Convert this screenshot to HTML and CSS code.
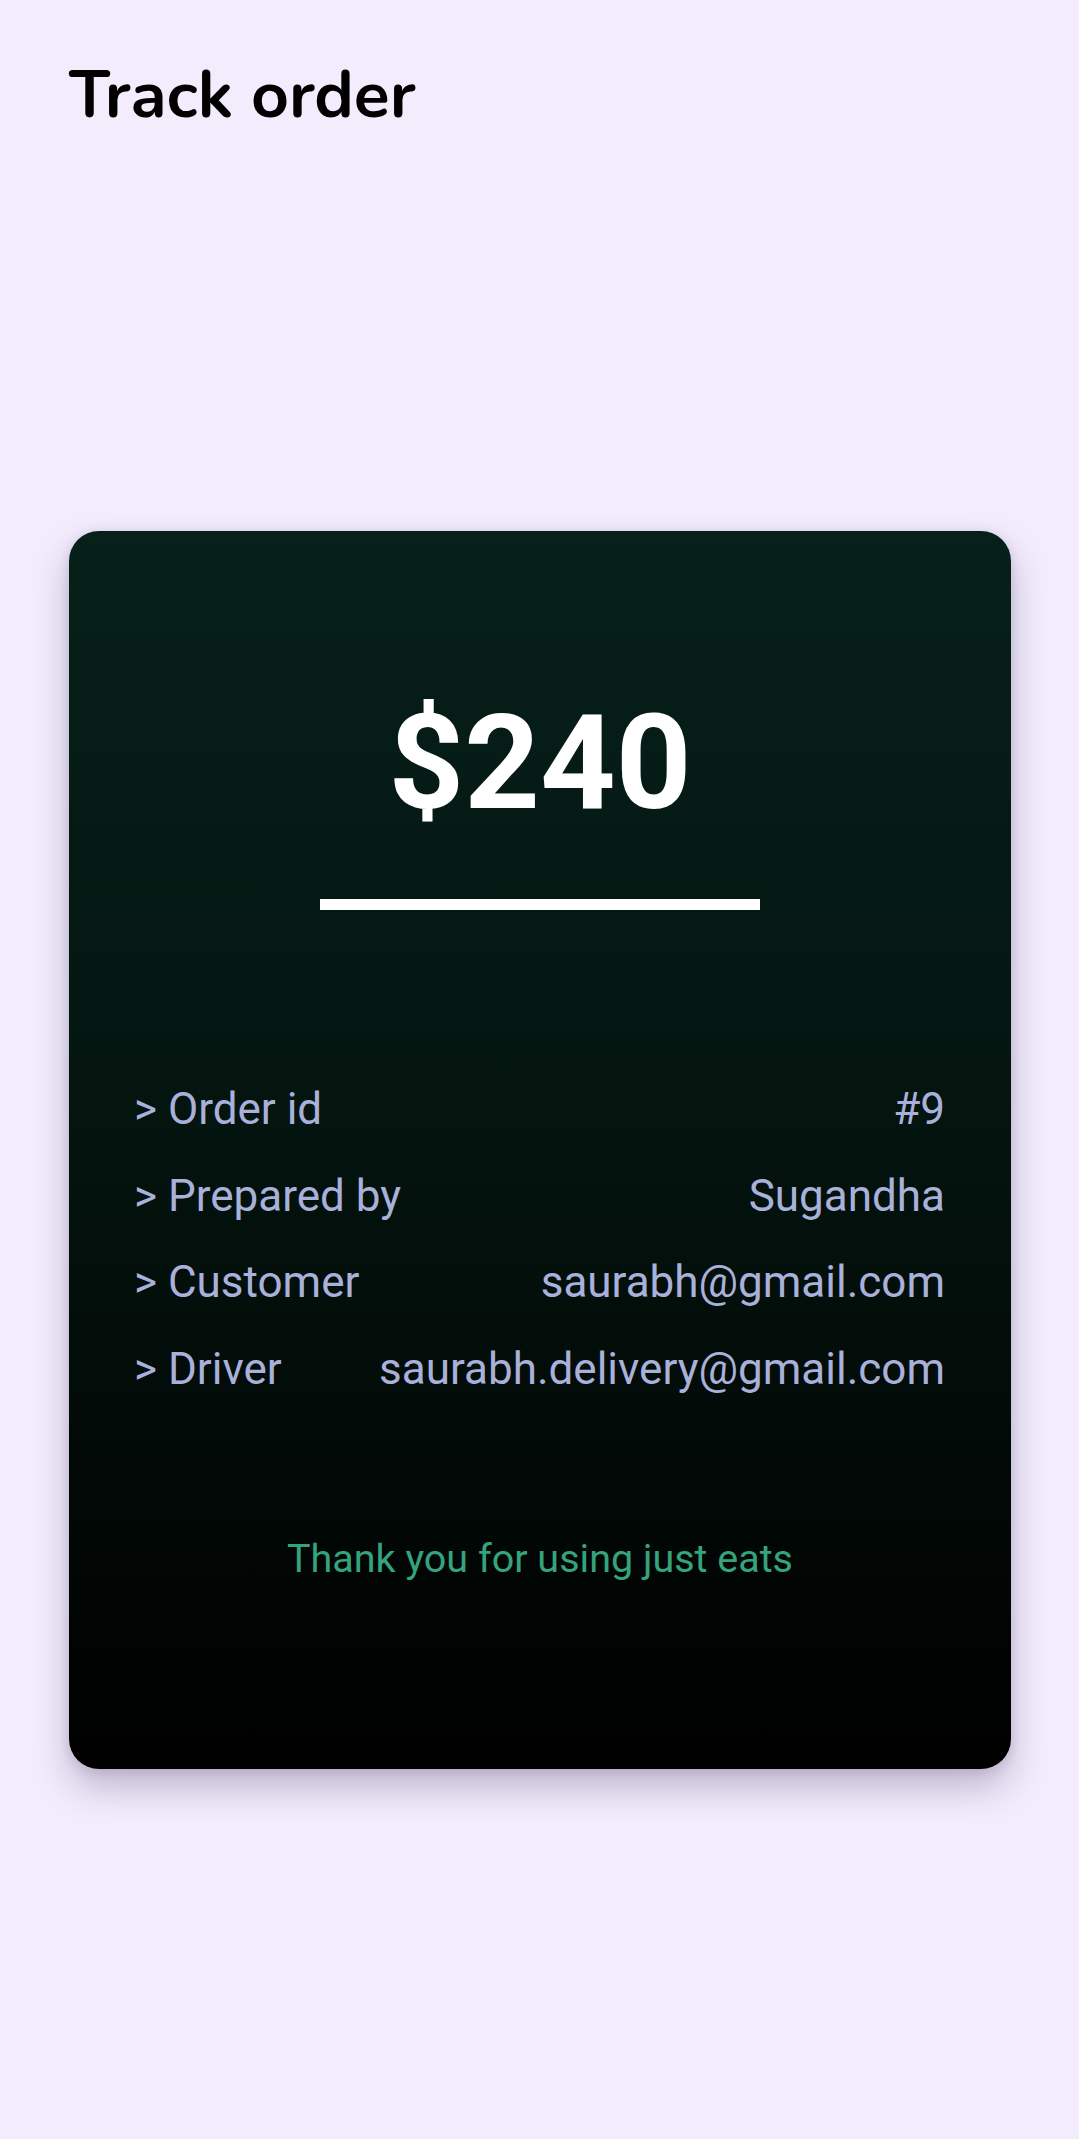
FILE: index.html
```html
<!DOCTYPE html>
<html lang="en">
<head>
<meta charset="utf-8">
<title>Track order</title>
<link rel="stylesheet" href="styles.css">
</head>
<body>
  <header class="topbar">
    <h1 class="title">Track order</h1>
  </header>
  <main class="content">
    <section class="card">
      <div class="price">$240</div>
      <div class="divider"></div>
      <div class="details">
        <div class="row"><span class="label">&gt; Order id</span><span class="value">#9</span></div>
        <div class="row"><span class="label">&gt; Prepared by</span><span class="value">Sugandha</span></div>
        <div class="row"><span class="label">&gt; Customer</span><span class="value">saurabh@gmail.com</span></div>
        <div class="row"><span class="label">&gt; Driver</span><span class="value">saurabh.delivery@gmail.com</span></div>
      </div>
      <p class="thanks">Thank you for using just eats</p>
    </section>
  </main>
</body>
</html>
```
FILE: styles.css
```css
html, body {
  margin: 0;
  padding: 0;
}
body {
  background: #f3ecfd;
  min-height: 2139px;
  font-family: Roboto, "Liberation Sans", sans-serif;
}
.topbar {
  padding: 55px 69px 0;
}
.title {
  margin: 0;
  font-family: "Nunito", Lato, "Open Sans", sans-serif;
  font-weight: 700;
  font-size: 66px;
  line-height: 80px;
  color: #000;
}
.content {
  padding: 0 68px 0 69px;
  margin-top: 396px;
}
.card {
  background: linear-gradient(180deg, #07201a 0%, #041510 45%, #000 100%);
  border-radius: 30px;
  height: 1238px;
  box-sizing: border-box;
  padding-top: 155px;
  box-shadow: 0 18px 36px rgba(40, 30, 70, 0.26), 0 2px 12px rgba(40, 30, 70, 0.12);
  display: flex;
  flex-direction: column;
  align-items: center;
}
.price {
  color: #fff;
  font-weight: 700;
  font-size: 132px;
  line-height: 155px;
}
.divider {
  width: 440px;
  height: 11px;
  background: #fff;
  margin-top: 58px;
}
.details {
  align-self: stretch;
  padding: 0 66px 0 65px;
  margin-top: 156px;
}
.row {
  display: flex;
  justify-content: space-between;
  font-size: 44px;
  line-height: 86.5px;
  color: #a9b1da;
}
.thanks {
  margin: 124px 0 0;
  font-size: 39.5px;
  line-height: 46px;
  color: #35a37c;
}
```
